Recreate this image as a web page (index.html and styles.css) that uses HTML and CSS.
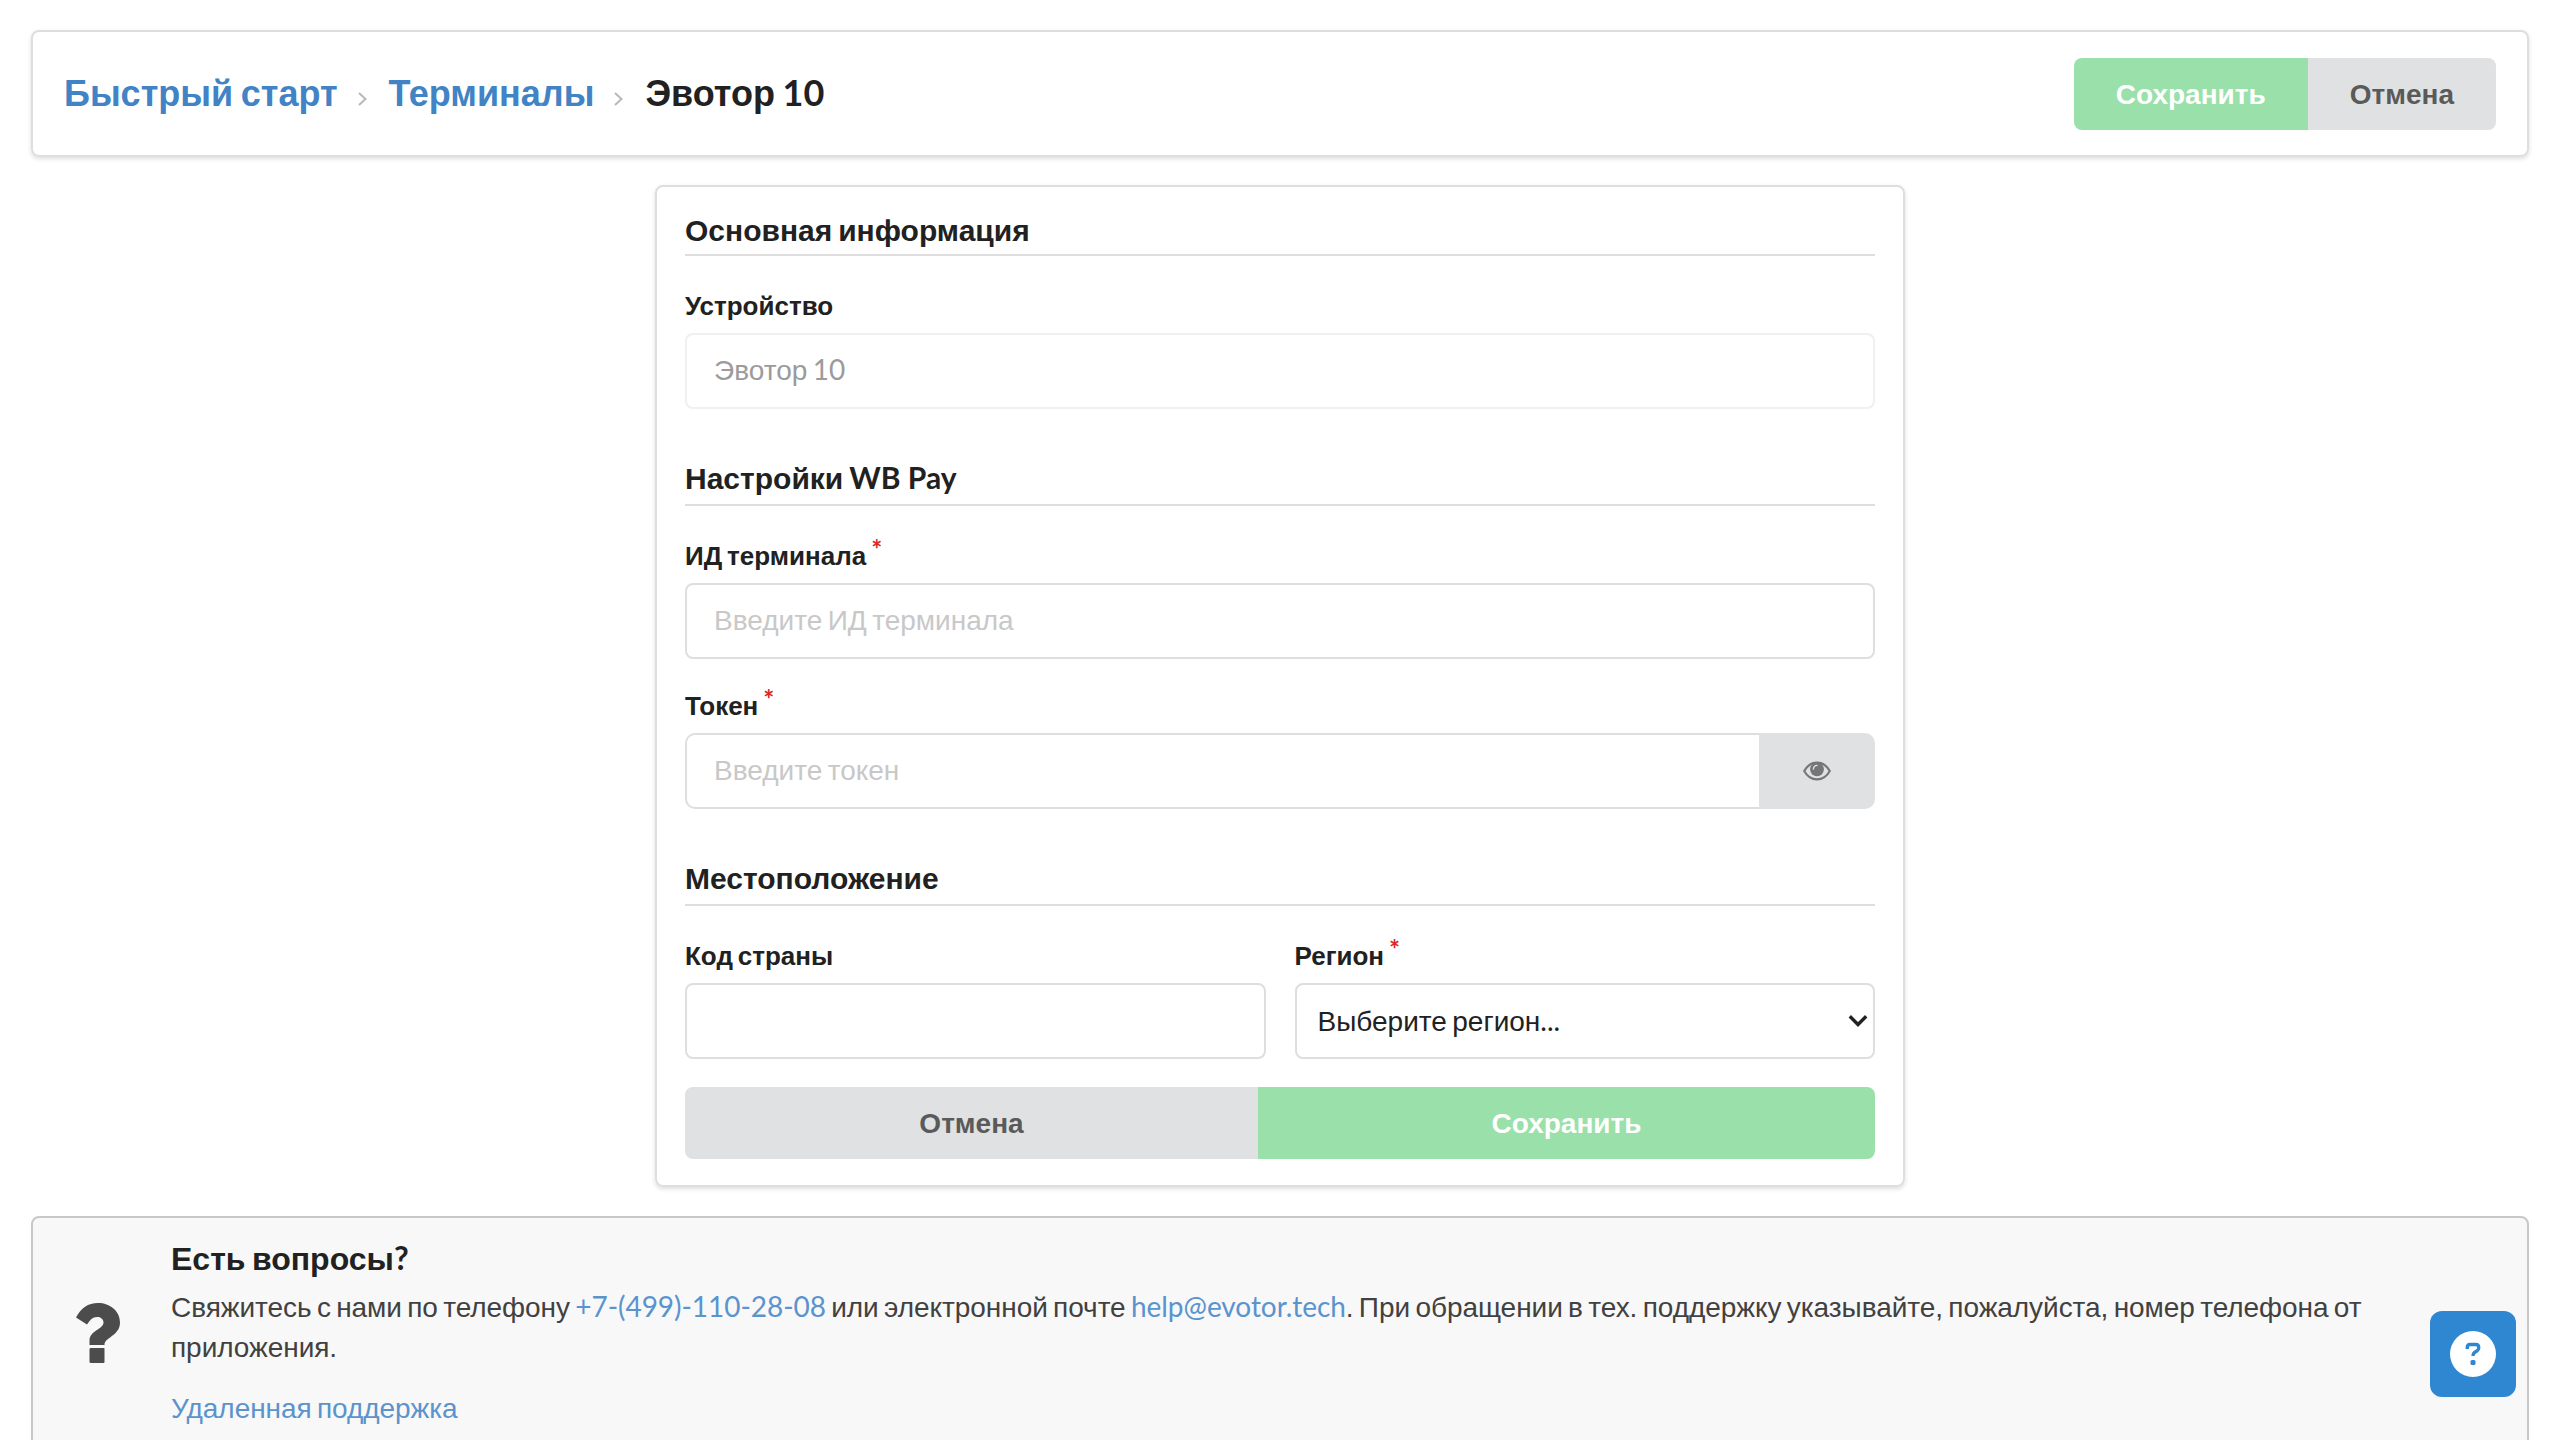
FILE: index.html
```html
<!DOCTYPE html>
<html lang="ru">
<head>
<meta charset="utf-8">
<title>Эвотор 10</title>
<link rel="stylesheet" href="styles.css">
</head>
<body>
<header class="topbar">
  <nav class="breadcrumb">
    <a class="crumb">Быстрый старт</a>
    <svg class="sep" width="9" height="14" viewBox="0 0 9 14"><path d="M1 1 7.500 7 1 13" fill="none" stroke="#b8b8b8" stroke-width="2"/></svg>
    <a class="crumb">Терминалы</a>
    <svg class="sep" width="9" height="14" viewBox="0 0 9 14"><path d="M1 1 7.500 7 1 13" fill="none" stroke="#b8b8b8" stroke-width="2"/></svg>
    <span class="crumb active">Эвотор <span class="lat">10</span></span>
  </nav>
  <div class="buttons">
    <button class="btn save">Сохранить</button><button class="btn cancel">Отмена</button>
  </div>
</header>

<main class="card">
  <h4 class="section">Основная информация</h4>
  <div class="field disabled">
    <label class="label">Устройство</label>
    <div class="input">Эвотор <span class="lat">10</span></div>
  </div>

  <h4 class="section">Настройки <span class="lat">WB Pay</span></h4>
  <div class="field">
    <label class="label">ИД терминала<span class="req">*</span></label>
    <div class="input placeholder">Введите ИД терминала</div>
  </div>
  <div class="field">
    <label class="label">Токен<span class="req">*</span></label>
    <div class="action">
      <div class="input placeholder">Введите токен</div>
      <button class="eye">
        <svg width="28" height="20" viewBox="0 0 28 20"><path d="M1.200 10C4.200 4.600 8.700 1.600 14 1.600S23.800 4.600 26.800 10C23.800 15.400 19.300 18.400 14 18.400S4.200 15.400 1.200 10Z" fill="none" stroke="#757676" stroke-width="2.100"/><circle cx="14" cy="8.300" r="6.900" fill="#757676"/><path d="M10.400 8.200A3.700 3.700 0 0 1 14 4.400" fill="none" stroke="#e0e1e2" stroke-width="1.300" stroke-linecap="round"/></svg>
      </button>
    </div>
  </div>

  <h4 class="section">Местоположение</h4>
  <div class="pair">
    <div class="field">
      <label class="label">Код страны</label>
      <div class="input"></div>
    </div>
    <div class="field">
      <label class="label">Регион<span class="req">*</span></label>
      <div class="input select"><span>Выберите регион<span class="lat">...</span></span>
        <svg width="20" height="14" viewBox="0 0 20 14"><path d="M1.800 2.300 10 10.500 18.200 2.300" fill="none" stroke="#212121" stroke-width="3.400"/></svg>
      </div>
    </div>
  </div>
  <div class="buttons wide">
    <button class="btn cancel">Отмена</button><button class="btn save">Сохранить</button>
  </div>
</main>

<footer class="message">
  <svg class="question" width="44" height="60" viewBox="0 0 44 60"><path d="M0 14.500C5 5 12 0 22 0 34 0 44 8 44 19.500 44 33 28.500 34 28.500 42H13.500V38C13.500 27 27.500 26.500 27.500 19.500 27.500 16 24.500 14 21 14 16.500 14 14 17 11 21.500ZM15 45H28Q28.500 45 28.500 46V59Q28.500 60 27.500 60H15Q13.500 60 13.500 59V46Q13.500 45 15 45Z" fill="#4c4c4c"/></svg>
  <div class="content">
    <div class="title">Есть вопросы<span class="lat">?</span></div>
    <p>Свяжитесь с нами по телефону <a class="lat">+7-(499)-110-28-08</a> или электронной почте <a class="lat">help@evotor.tech</a>. При обращении в тех. поддержку указывайте, пожалуйста, номер телефона от приложения.</p>
    <p><a>Удаленная поддержка</a></p>
  </div>
</footer>
<button class="help">
  <svg width="46" height="46" viewBox="0 0 46 46"><circle cx="23" cy="23" r="23" fill="#fff"/><path d="M17.300 18V16.500Q17.300 13.500 20 13.500H26Q28.700 13.500 28.700 16.500V17Q28.700 18.500 27 19.800L24.500 21.500Q23 22.500 23 25" fill="none" stroke="#2f86d1" stroke-width="3.400"/><rect x="20.500" y="29" width="5" height="5" rx="1.500" fill="#2f86d1"/></svg>
</button>
</body>
</html>
```
FILE: styles.css
```css
* { box-sizing: border-box; }
html { overflow: hidden; }
body {
  margin: 0;
  padding: 30px 31px 0;
  height: 1440px;
  overflow: hidden;
  background: #fff;
  color: #212121;
  font: 28px/40px "Liberation Sans", Arial, sans-serif;
  word-spacing: -0.085em;
}
.lat { font-family: Lato, sans-serif; line-height: 1; word-spacing: 0; }
a { color: #4183c4; text-decoration: none; }
button {
  margin: 0;
  padding: 0;
  border: 0;
  font: inherit;
}
.topbar {
  display: flex;
  align-items: center;
  justify-content: space-between;
  height: 127px;
  padding: 0 31px;
  border: 2px solid #dededf;
  border-radius: 8px;
  box-shadow: 0 2px 4px rgba(34, 36, 38, .15);
}
.breadcrumb { display: flex; align-items: baseline; padding-top: 1px; font-size: 36px; font-weight: 700; }
.sep { margin: 0 22px 0 20px; }
.buttons { display: flex; }
.btn {
  height: 72px;
  padding: 1px 42px 0;
  font-weight: 700;
  line-height: 71px;
}
.btn:first-child { border-radius: 8px 0 0 8px; }
.btn:last-child { border-radius: 0 8px 8px 0; }
.save { background: #9ae0aa; color: #fff; }
.cancel { background: #e0e1e2; color: #5a5a5a; }
.wide .cancel { width: 573px; }
.wide .save { flex: 1; }
.wide { margin-top: 28px; }

.card {
  width: 1250px;
  height: 1002px;
  margin: 28px auto 0;
  padding: 26px 28px 0;
  border: 2px solid #dededf;
  border-radius: 8px;
  box-shadow: 0 2px 4px rgba(34, 36, 38, .15);
}
.section {
  height: 43px;
  margin: 0 0 32px;
  border-bottom: 2px solid #dededf;
  font-size: 30px;
  line-height: 36px;
}
.label {
  display: block;
  height: 45px;
  font-size: 26px;
  font-weight: 700;
  line-height: 36px;
}
.req {
  margin-left: 5px;
  color: #db2828;
  font: 700 26px/20px Lato, sans-serif;
  vertical-align: 6px;
}
.input {
  height: 76px;
  padding: 0 27px;
  border: 2px solid #dededf;
  border-radius: 8px;
  line-height: 71px;
}
.placeholder { color: #c8c8c8; }
.field + .section { height: 45px; margin-top: 52px; }
.field + .field { margin-top: 29px; }
.disabled .input { border-color: #f0f0f0; color: #9b9b9b; }
.action { display: flex; }
.action .input { flex: 1; border-right: 0; border-radius: 10px 0 0 10px; }
.eye {
  display: flex;
  align-items: center;
  justify-content: center;
  width: 116px;
  background: #e0e1e2;
  border-radius: 0 10px 10px 0;
}
.pair { display: grid; grid-template-columns: 1fr 1fr; gap: 29px; }
.pair .field { margin: 0; }
.select {
  display: flex;
  align-items: center;
  justify-content: space-between;
  padding: 0 5px 0 21px;
}

.message {
  display: flex;
  height: 260px;
  margin-top: 29px;
  padding: 20px 140px 0 44px;
  background: #f8f8f8;
  border: 2px solid #c8c8c9;
  border-radius: 8px;
  color: #414141;
}
.message a { color: #5b93cd; }
.question { flex: none; margin: 65px 51px 0 -1px; }
.title { color: #212121; font-size: 32px; font-weight: 700; line-height: 42px; }
.message p { margin: 8px 0 21px; letter-spacing: -0.05px; }
.message p + p { margin: 0; }

.help {
  position: fixed;
  right: 44px;
  bottom: 43px;
  display: flex;
  align-items: center;
  justify-content: center;
  width: 86px;
  height: 86px;
  background: #2f86d1;
  border-radius: 12px;
}
```
